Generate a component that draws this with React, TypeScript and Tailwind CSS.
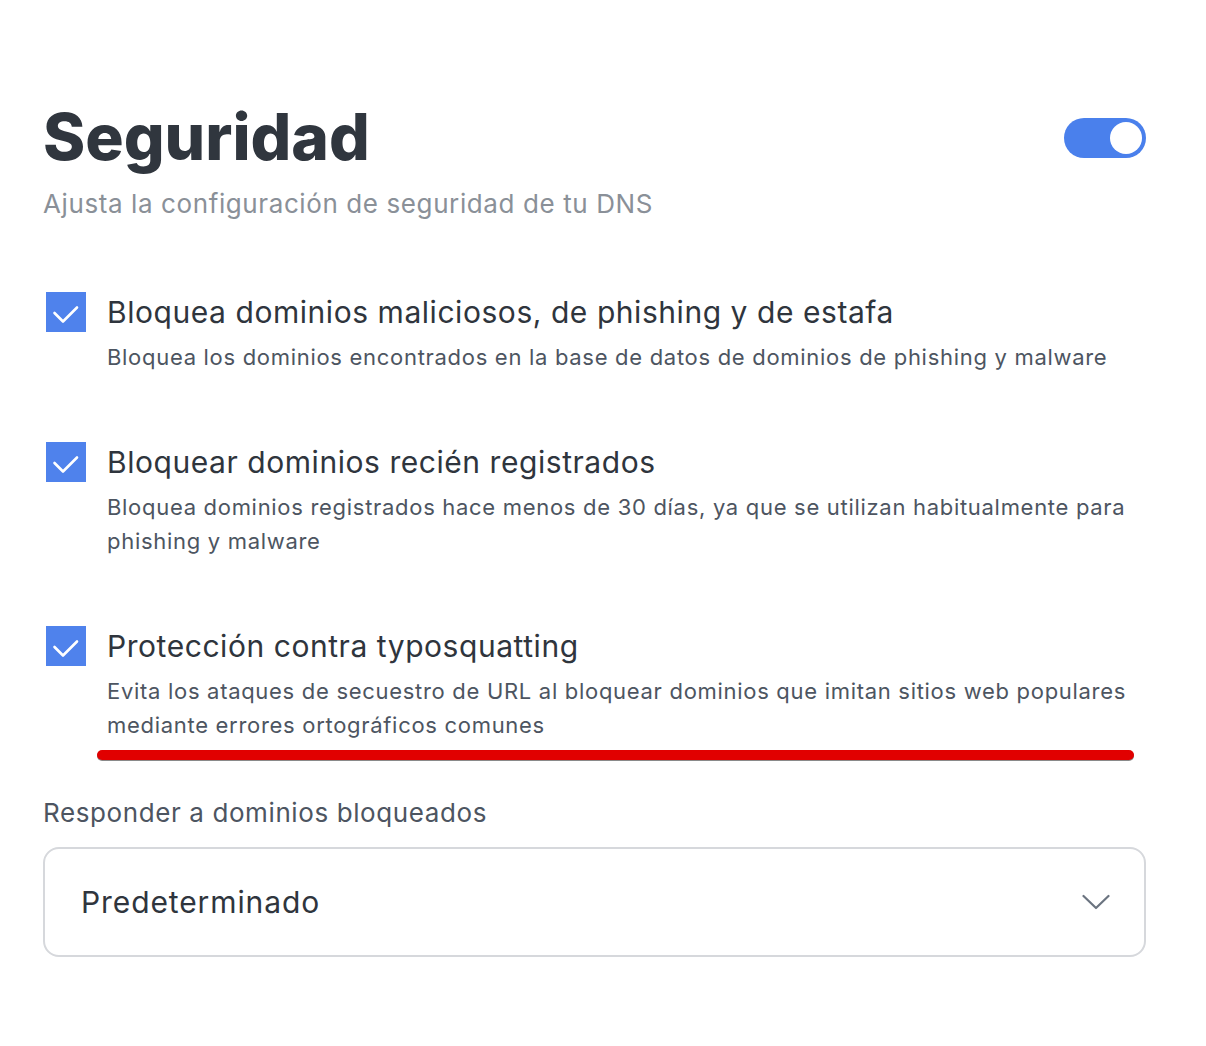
import { useState } from 'react';

type Option = {
  title: string;
  description: string;
};

const options: Option[] = [
  {
    title: 'Bloquea dominios maliciosos, de phishing y de estafa',
    description: 'Bloquea los dominios encontrados en la base de datos de dominios de phishing y malware',
  },
  {
    title: 'Bloquear dominios recién registrados',
    description:
      'Bloquea dominios registrados hace menos de 30 días, ya que se utilizan habitualmente para phishing y malware',
  },
  {
    title: 'Protección contra typosquatting',
    description:
      'Evita los ataques de secuestro de URL al bloquear dominios que imitan sitios web populares mediante errores ortográficos comunes',
  },
];

function Checkbox({ checked }: { checked: boolean }) {
  return (
    <div className="w-10 h-10 shrink-0 bg-[#4f82ec] flex items-center justify-center">
      {checked && (
        <svg width="40" height="40" viewBox="0 0 40 40" fill="none">
          <polyline points="8.5,21 17,29.5 31,15.5" stroke="white" strokeWidth="2.6" strokeLinecap="round" strokeLinejoin="round" />
        </svg>
      )}
    </div>
  );
}

function App() {
  const [enabled, setEnabled] = useState(true);

  return (
    <div className="bg-white w-[1206px] h-[1046px] font-['Inter',sans-serif] [font-optical-sizing:none]">
      <div className="pl-[43px] pr-[60px] pt-[105px]">
        {/* header */}
        <div className="flex items-start justify-between">
          <div>
            <h1 className="text-[64px] leading-[64px] font-extrabold text-[#30363e]">Seguridad</h1>
            <p className="mt-[18px] text-[26px] leading-[34px] tracking-[0.6px] text-[#8a9098]">
              Ajusta la configuración de seguridad de tu DNS
            </p>
          </div>
          <button
            onClick={() => setEnabled(!enabled)}
            className="mt-[13px] w-[82px] h-10 rounded-full bg-[#4a80ec] flex items-center justify-end px-1"
          >
            <span className="w-8 h-8 rounded-full bg-white" />
          </button>
        </div>

        {/* options */}
        <div className="mt-[71px] flex flex-col gap-[68px]">
          {options.map((opt) => (
            <div key={opt.title} className="flex items-start gap-[21px] pl-[3px]">
              <Checkbox checked />
              <div>
                <div className="text-[30px] leading-10 tracking-[0.55px] text-[#2f353d]">{opt.title}</div>
                <div className="mt-2 text-[22px] leading-[34px] tracking-[0.7px] text-[#4d5561]">{opt.description}</div>
              </div>
            </div>
          ))}
        </div>

        <div className="mt-2 ml-[54px] mr-[12px] h-[10px] rounded-full bg-[#e10000] shadow-[0_1px_0_#8a8a8a]" />

        {/* blocked domain response */}
        <div className="mt-9 text-[26px] leading-[34px] tracking-[0.6px] text-[#4d5561]">Responder a dominios bloqueados</div>
        <div className="mt-[17px] h-[110px] rounded-2xl border-2 border-[#d6d8dc] flex items-center justify-between pl-[36px] pr-[34px]">
          <span className="text-[30px] leading-10 tracking-[0.9px] text-[#2f353d]">Predeterminado</span>
          <svg width="28" height="16" viewBox="0 0 28 16" fill="none">
            <polyline points="1.5,2 14,14 26.5,2" stroke="#6b7480" strokeWidth="2.2" strokeLinecap="round" strokeLinejoin="round" />
          </svg>
        </div>
      </div>
    </div>
  );
}

export default App;
